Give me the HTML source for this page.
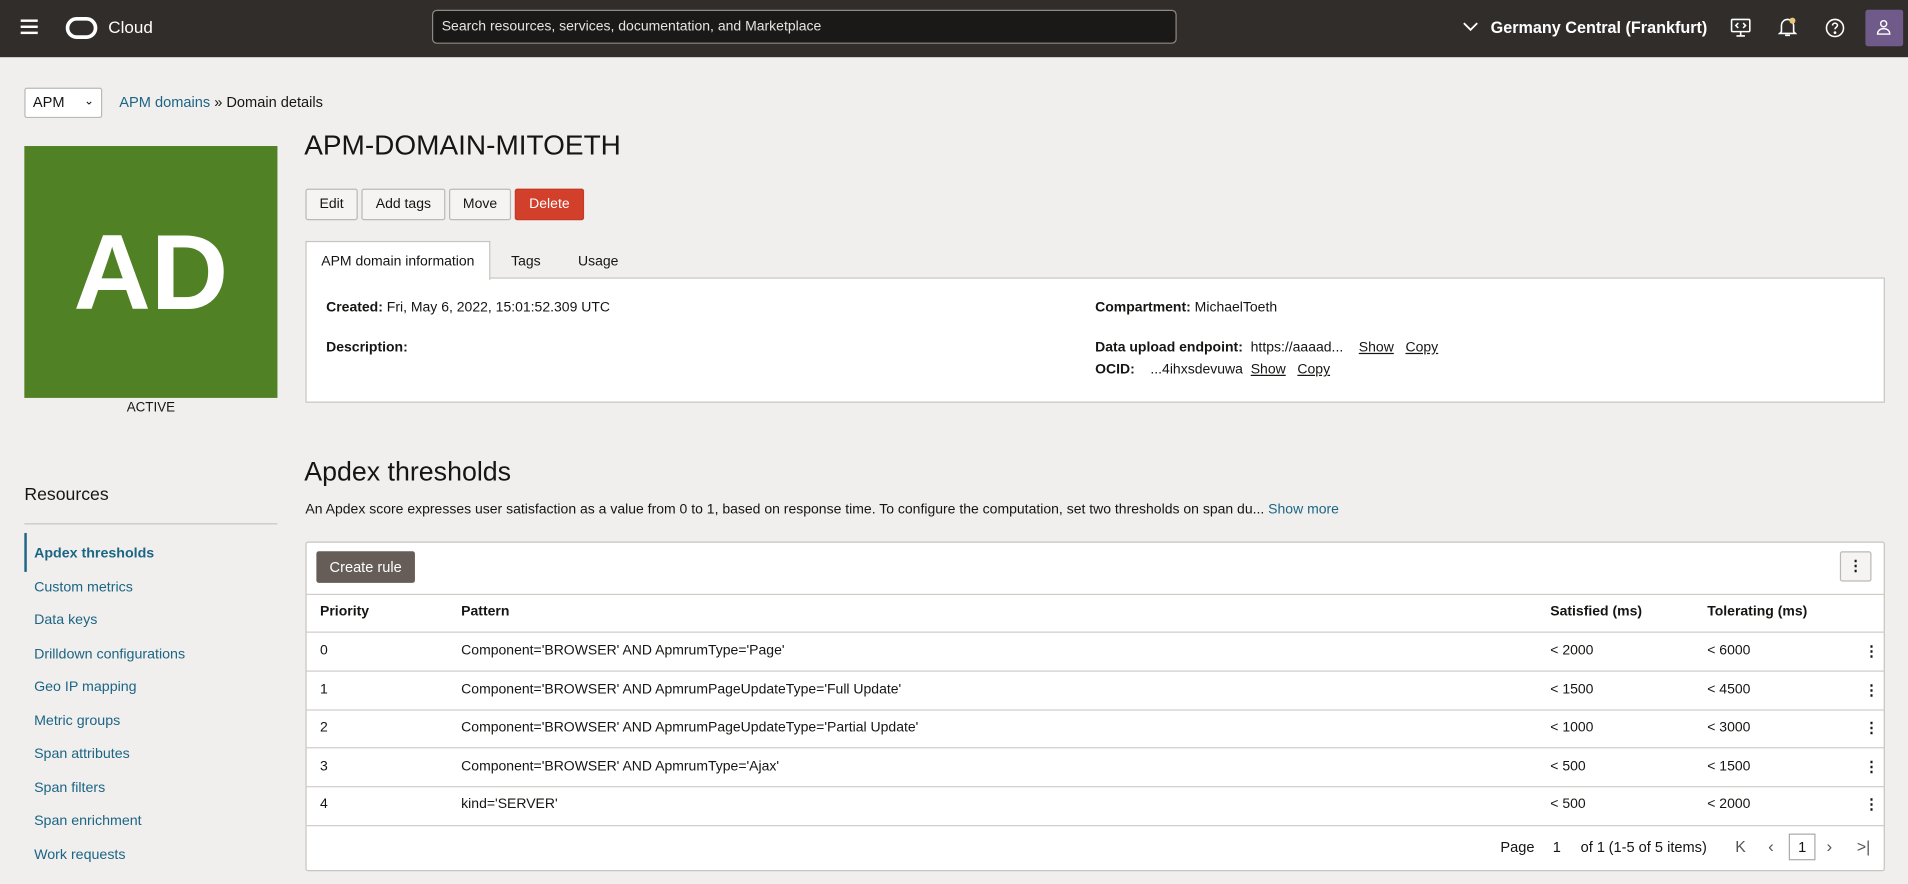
<!DOCTYPE html>
<html><head><meta charset="utf-8"><style>
*{box-sizing:border-box;margin:0;padding:0}
html,body{width:1908px;height:884px;overflow:hidden;background:#f1efed}
#w{position:absolute;left:0;top:0;width:1568px;height:726px;transform:scale(1.21684);transform-origin:0 0;font-family:"Liberation Sans",sans-serif;color:#161513;font-size:12px}
.a{position:absolute;white-space:nowrap}
.hdr{position:absolute;left:0;top:0;width:1568px;height:47px;background:#312d2a}
.btn{position:absolute;top:155px;height:26px;border:1px solid #bcb8b4;background:#f5f4f2;border-radius:2px;font-size:11.5px;line-height:24px;text-align:center}
.nav{position:absolute;left:28px;color:#1b6585;font-size:11.7px}
.row{position:absolute;left:251px;width:1298px;border-top:1px solid #d0ccc8}
.c{position:absolute;font-size:11.5px;white-space:nowrap}
.k{position:absolute;left:1532px;font-weight:bold;font-size:12px}
.u{text-decoration:underline}
</style></head><body><div id="w">
<div class="hdr">
 <div class="a" style="left:17px;top:16px;width:14px;height:2px;background:#fff;box-shadow:0 5px 0 #fff,0 10px 0 #fff"></div>
 <div class="a" style="left:54px;top:14px;width:26px;height:18px;border:3px solid #fff;border-radius:9px"></div>
 <div class="a" style="left:89px;top:14px;color:#fff;font-size:14px">Cloud</div>
 <div class="a" style="left:355px;top:8px;width:612px;height:28px;background:#1b1917;border:1px solid #8d8985;border-radius:4px;color:#e6e3e0;font-size:11.5px;line-height:26px;padding-left:7px">Search resources, services, documentation, and Marketplace</div>
 <svg class="a" style="left:1202px;top:17px" width="13" height="10" viewBox="0 0 13 10"><path d="M1 2l5.5 5.5L12 2" stroke="#fff" stroke-width="1.5" fill="none"/></svg>
 <div class="a" style="left:1225px;top:15px;color:#fff;font-size:13.3px;font-weight:bold">Germany Central (Frankfurt)</div>
 <svg class="a" style="left:1422px;top:14px" width="17" height="17" viewBox="0 0 17 17" fill="none" stroke="#fff" stroke-width="1.3"><rect x="1" y="2" width="15" height="10" rx="1"/><path d="M8.5 12v3M5 15.5h7M6.5 5l-2 2 2 2M10.5 5l2 2-2 2"/></svg>
 <svg class="a" style="left:1461px;top:13px" width="16" height="18" viewBox="0 0 16 18" fill="none" stroke="#fff" stroke-width="1.3"><path d="M3 13V8a5 5 0 0110 0v5l1.5 1.5h-13zM6 16h4"/><circle cx="12" cy="4" r="2.5" fill="#e8c77a" stroke="none"/></svg>
 <svg class="a" style="left:1500px;top:15px" width="16" height="16" viewBox="0 0 16 16" fill="none" stroke="#fff" stroke-width="1.3"><circle cx="8" cy="8" r="7"/><path d="M6 6a2 2 0 114 0c0 1.3-2 1.5-2 3"/><circle cx="8" cy="11.8" r=".5" fill="#fff"/></svg>
 <div class="a" style="left:1533px;top:8px;width:31px;height:30px;background:#705a8a;border-radius:2px"></div>
 <svg class="a" style="left:1541px;top:15px" width="14" height="15" viewBox="0 0 14 15" fill="none" stroke="#fff" stroke-width="1.2"><circle cx="7" cy="4.5" r="2.5"/><path d="M2 13c0-3 2.5-4.5 5-4.5s5 1.5 5 4.5z"/></svg>
</div>

<div class="a" style="left:20px;top:72px;width:64px;height:25px;background:#fff;border:1px solid #bcb8b4;border-radius:2px;font-size:12px;line-height:23px;padding-left:6px">APM<span style="position:absolute;left:48px;top:-1px;font-size:10px">&#8964;</span></div>
<div class="a" style="left:98px;top:77px;font-size:12px"><span style="color:#1b6585">APM domains</span> » Domain details</div>

<div class="a" style="left:20px;top:120px;width:208px;height:207px;background:#518125;color:#fff;font-weight:bold;font-size:88px;text-align:center;line-height:207px">AD</div>
<div class="a" style="left:20px;top:329px;width:208px;text-align:center;font-size:11px">ACTIVE</div>

<div class="a" style="left:250px;top:106px;font-size:23px">APM-DOMAIN-MITOETH</div>
<div class="btn" style="left:251px;width:43px">Edit</div>
<div class="btn" style="left:297px;width:69px">Add tags</div>
<div class="btn" style="left:369px;width:51px">Move</div>
<div class="btn" style="left:423px;width:57px;background:#d23f2a;border-color:#c33a26;color:#fff">Delete</div>

<div class="a" style="left:251px;top:228px;width:1298px;height:103px;background:#fff;border:1px solid #c8c4c0"></div>
<div class="a" style="left:251px;top:198px;width:152px;height:32px;background:#fff;border:1px solid #c8c4c0;border-bottom:none;font-size:11.5px;padding:10px 0 0 12px">APM domain information</div>
<div class="a" style="left:420px;top:209px;font-size:11.5px">Tags</div>
<div class="a" style="left:475px;top:209px;font-size:11.5px">Usage</div>
<div class="c" style="left:268px;top:247px"><b>Created:</b> Fri, May 6, 2022, 15:01:52.309 UTC</div>
<div class="c" style="left:268px;top:280px"><b>Description:</b></div>
<div class="c" style="left:900px;top:247px"><b>Compartment:</b> MichaelToeth</div>
<div class="c" style="left:900px;top:280px"><b>Data upload endpoint:</b>&nbsp; https://aaaad... &nbsp;&nbsp; <span class="u">Show</span> &nbsp; <span class="u">Copy</span></div>
<div class="c" style="left:900px;top:298px"><b>OCID:</b> &nbsp;&nbsp; ...4ihxsdevuwa &nbsp;<span class="u">Show</span> &nbsp; <span class="u">Copy</span></div>

<div class="a" style="left:250px;top:375px;font-size:22px">Apdex thresholds</div>
<div class="c" style="left:251px;top:413px">An Apdex score expresses user satisfaction as a value from 0 to 1, based on response time. To configure the computation, set two thresholds on span du... <span style="color:#1b6585">Show more</span></div>
<div class="a" style="left:20px;top:399px;font-size:14.5px">Resources</div>
<div class="a" style="left:20px;top:430px;width:208px;height:1px;background:#c8c4c0"></div>
<div class="a" style="left:20px;top:438px;width:2px;height:32px;background:#1b6585"></div>
<div class="nav" style="top:448px;font-weight:bold">Apdex thresholds</div>
<div class="nav" style="top:476px">Custom metrics</div>
<div class="nav" style="top:503px">Data keys</div>
<div class="nav" style="top:531px">Drilldown configurations</div>
<div class="nav" style="top:558px">Geo IP mapping</div>
<div class="nav" style="top:586px">Metric groups</div>
<div class="nav" style="top:613px">Span attributes</div>
<div class="nav" style="top:641px">Span filters</div>
<div class="nav" style="top:668px">Span enrichment</div>
<div class="nav" style="top:696px">Work requests</div>

<div class="a" style="left:251px;top:445px;width:1298px;height:271px;background:#fff;border:1px solid #c8c4c0;border-radius:2px"></div>
<div class="a" style="left:260px;top:453px;width:81px;height:26px;background:#665d58;color:#fff;border-radius:2px;font-size:12px;line-height:26px;text-align:center">Create rule</div>
<div class="a" style="left:1512px;top:453px;width:26px;height:25px;border:1px solid #bcb8b4;background:#f5f4f2;border-radius:2px;text-align:center;font-weight:bold;line-height:22px;font-size:12px">&#8942;</div>
<div class="row" style="top:488px;height:31px"></div>
<div class="row" style="top:519px"></div><div class="row" style="top:551px"></div><div class="row" style="top:583px"></div><div class="row" style="top:614px"></div><div class="row" style="top:646px"></div><div class="row" style="top:678px"></div>
<div class="c" style="left:263px;top:497px;font-weight:bold">Priority</div>
<div class="c" style="left:379px;top:497px;font-weight:bold">Pattern</div>
<div class="c" style="left:1274px;top:497px;font-weight:bold">Satisfied (ms)</div>
<div class="c" style="left:1403px;top:497px;font-weight:bold">Tolerating (ms)</div>

<div class="c" style="left:263px;top:529px">0</div><div class="c" style="left:379px;top:529px">Component='BROWSER' AND ApmrumType='Page'</div><div class="c" style="left:1274px;top:529px">&lt; 2000</div><div class="c" style="left:1403px;top:529px">&lt; 6000</div><div class="k" style="top:528px">&#8942;</div>
<div class="c" style="left:263px;top:561px">1</div><div class="c" style="left:379px;top:561px">Component='BROWSER' AND ApmrumPageUpdateType='Full Update'</div><div class="c" style="left:1274px;top:561px">&lt; 1500</div><div class="c" style="left:1403px;top:561px">&lt; 4500</div><div class="k" style="top:560px">&#8942;</div>
<div class="c" style="left:263px;top:592px">2</div><div class="c" style="left:379px;top:592px">Component='BROWSER' AND ApmrumPageUpdateType='Partial Update'</div><div class="c" style="left:1274px;top:592px">&lt; 1000</div><div class="c" style="left:1403px;top:592px">&lt; 3000</div><div class="k" style="top:591px">&#8942;</div>
<div class="c" style="left:263px;top:624px">3</div><div class="c" style="left:379px;top:624px">Component='BROWSER' AND ApmrumType='Ajax'</div><div class="c" style="left:1274px;top:624px">&lt; 500</div><div class="c" style="left:1403px;top:624px">&lt; 1500</div><div class="k" style="top:623px">&#8942;</div>
<div class="c" style="left:263px;top:655px">4</div><div class="c" style="left:379px;top:655px">kind='SERVER'</div><div class="c" style="left:1274px;top:655px">&lt; 500</div><div class="c" style="left:1403px;top:655px">&lt; 2000</div><div class="k" style="top:654px">&#8942;</div>

<div class="c" style="left:1233px;top:689px;font-size:12px">Page</div>
<div class="c" style="left:1276px;top:689px;font-size:12px">1</div>
<div class="c" style="left:1299px;top:689px;font-size:12px">of 1</div>
<div class="c" style="left:1322px;top:689px;font-size:12px">(1-5 of 5 items)</div>
<div class="c" style="left:1426px;top:688px;font-size:13px;color:#555">K</div>
<div class="c" style="left:1453px;top:687px;font-size:14px;color:#555">&#8249;</div>
<div class="a" style="left:1470px;top:685px;width:22px;height:22px;border:1px solid #aaa;text-align:center;line-height:20px;font-size:12px">1</div>
<div class="c" style="left:1501px;top:687px;font-size:14px;color:#555">&#8250;</div>
<div class="c" style="left:1526px;top:688px;font-size:13px;color:#555">&gt;|</div>
</div></body></html>
